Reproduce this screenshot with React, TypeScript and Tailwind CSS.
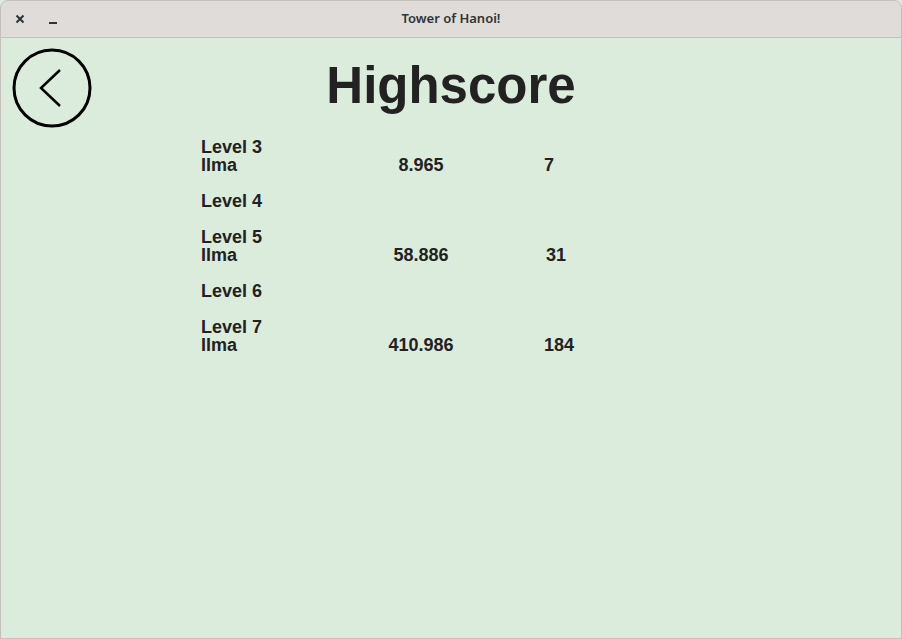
import React from "react";

type Entry = { name: string; time: string; moves: string; movesPad: string };
type Level = { label: string; entries: Entry[] };

const levels: Level[] = [
  { label: "Level 3", entries: [{ name: "Ilma", time: "8.965", moves: "7", movesPad: "pl-[43px]" }] },
  { label: "Level 4", entries: [] },
  { label: "Level 5", entries: [{ name: "Ilma", time: "58.886", moves: "31", movesPad: "pl-[45px]" }] },
  { label: "Level 6", entries: [] },
  { label: "Level 7", entries: [{ name: "Ilma", time: "410.986", moves: "184", movesPad: "pl-[43px]" }] },
];

export default function App() {
  return (
    <div className="w-[902px] h-[639px] bg-[#dcecdc] flex flex-col overflow-hidden" style={{ fontFamily: '"Liberation Sans", Arial, sans-serif' }}>
      <div className="h-[38px] shrink-0 bg-[#dfdcd9] border border-[#c4c1bd] rounded-t-[8px] flex items-center relative">
        <div className="flex items-center pl-[12px] text-[#2e3436]">
          <svg width="12" height="12" viewBox="0 0 12 12" className="ml-[1px]">
            <path d="M2.5 2.5 L9.5 9.5 M9.5 2.5 L2.5 9.5" stroke="#2e3436" strokeWidth="2" />
          </svg>
          <div className="ml-[23px] mt-[8px] w-[8px] h-[2px] bg-[#2e3436]" />
        </div>
        <div className="absolute inset-0 flex items-center justify-center text-[13px] font-semibold text-[#2e3436]" style={{ fontFamily: '"Noto Sans", sans-serif' }}>
          Tower of Hanoi!
        </div>
      </div>
      <div className="flex-1 border-x border-b border-[#c4c1bd] flex flex-col">
        <div className="grid grid-cols-[1fr_auto_1fr] h-[100px]">
          <div className="pl-[11px] pt-[10px]">
            <svg width="80" height="80" viewBox="0 0 80 80">
              <circle cx="40" cy="40" r="38" fill="none" stroke="#000" strokeWidth="3" />
              <path d="M48 22 L29 40 L48 58" fill="none" stroke="#000" strokeWidth="2.5" />
            </svg>
          </div>
          <div className="pt-[22px] text-[51px] leading-none font-bold text-[#222222]">Highscore</div>
          <div />
        </div>
        <div className="pl-[200px] text-[18px] leading-[18px] font-bold text-[#222222] flex flex-col gap-[18px]">
          {levels.map((lv) => (
            <div key={lv.label} className="flex flex-col">
              <div>{lv.label}</div>
              {lv.entries.map((e, i) => (
                <div key={i} className="flex">
                  <div className="w-[140px]">{e.name}</div>
                  <div className="w-[160px] text-center">{e.time}</div>
                  <div className={e.movesPad}>{e.moves}</div>
                </div>
              ))}
            </div>
          ))}
        </div>
      </div>
    </div>
  );
}
